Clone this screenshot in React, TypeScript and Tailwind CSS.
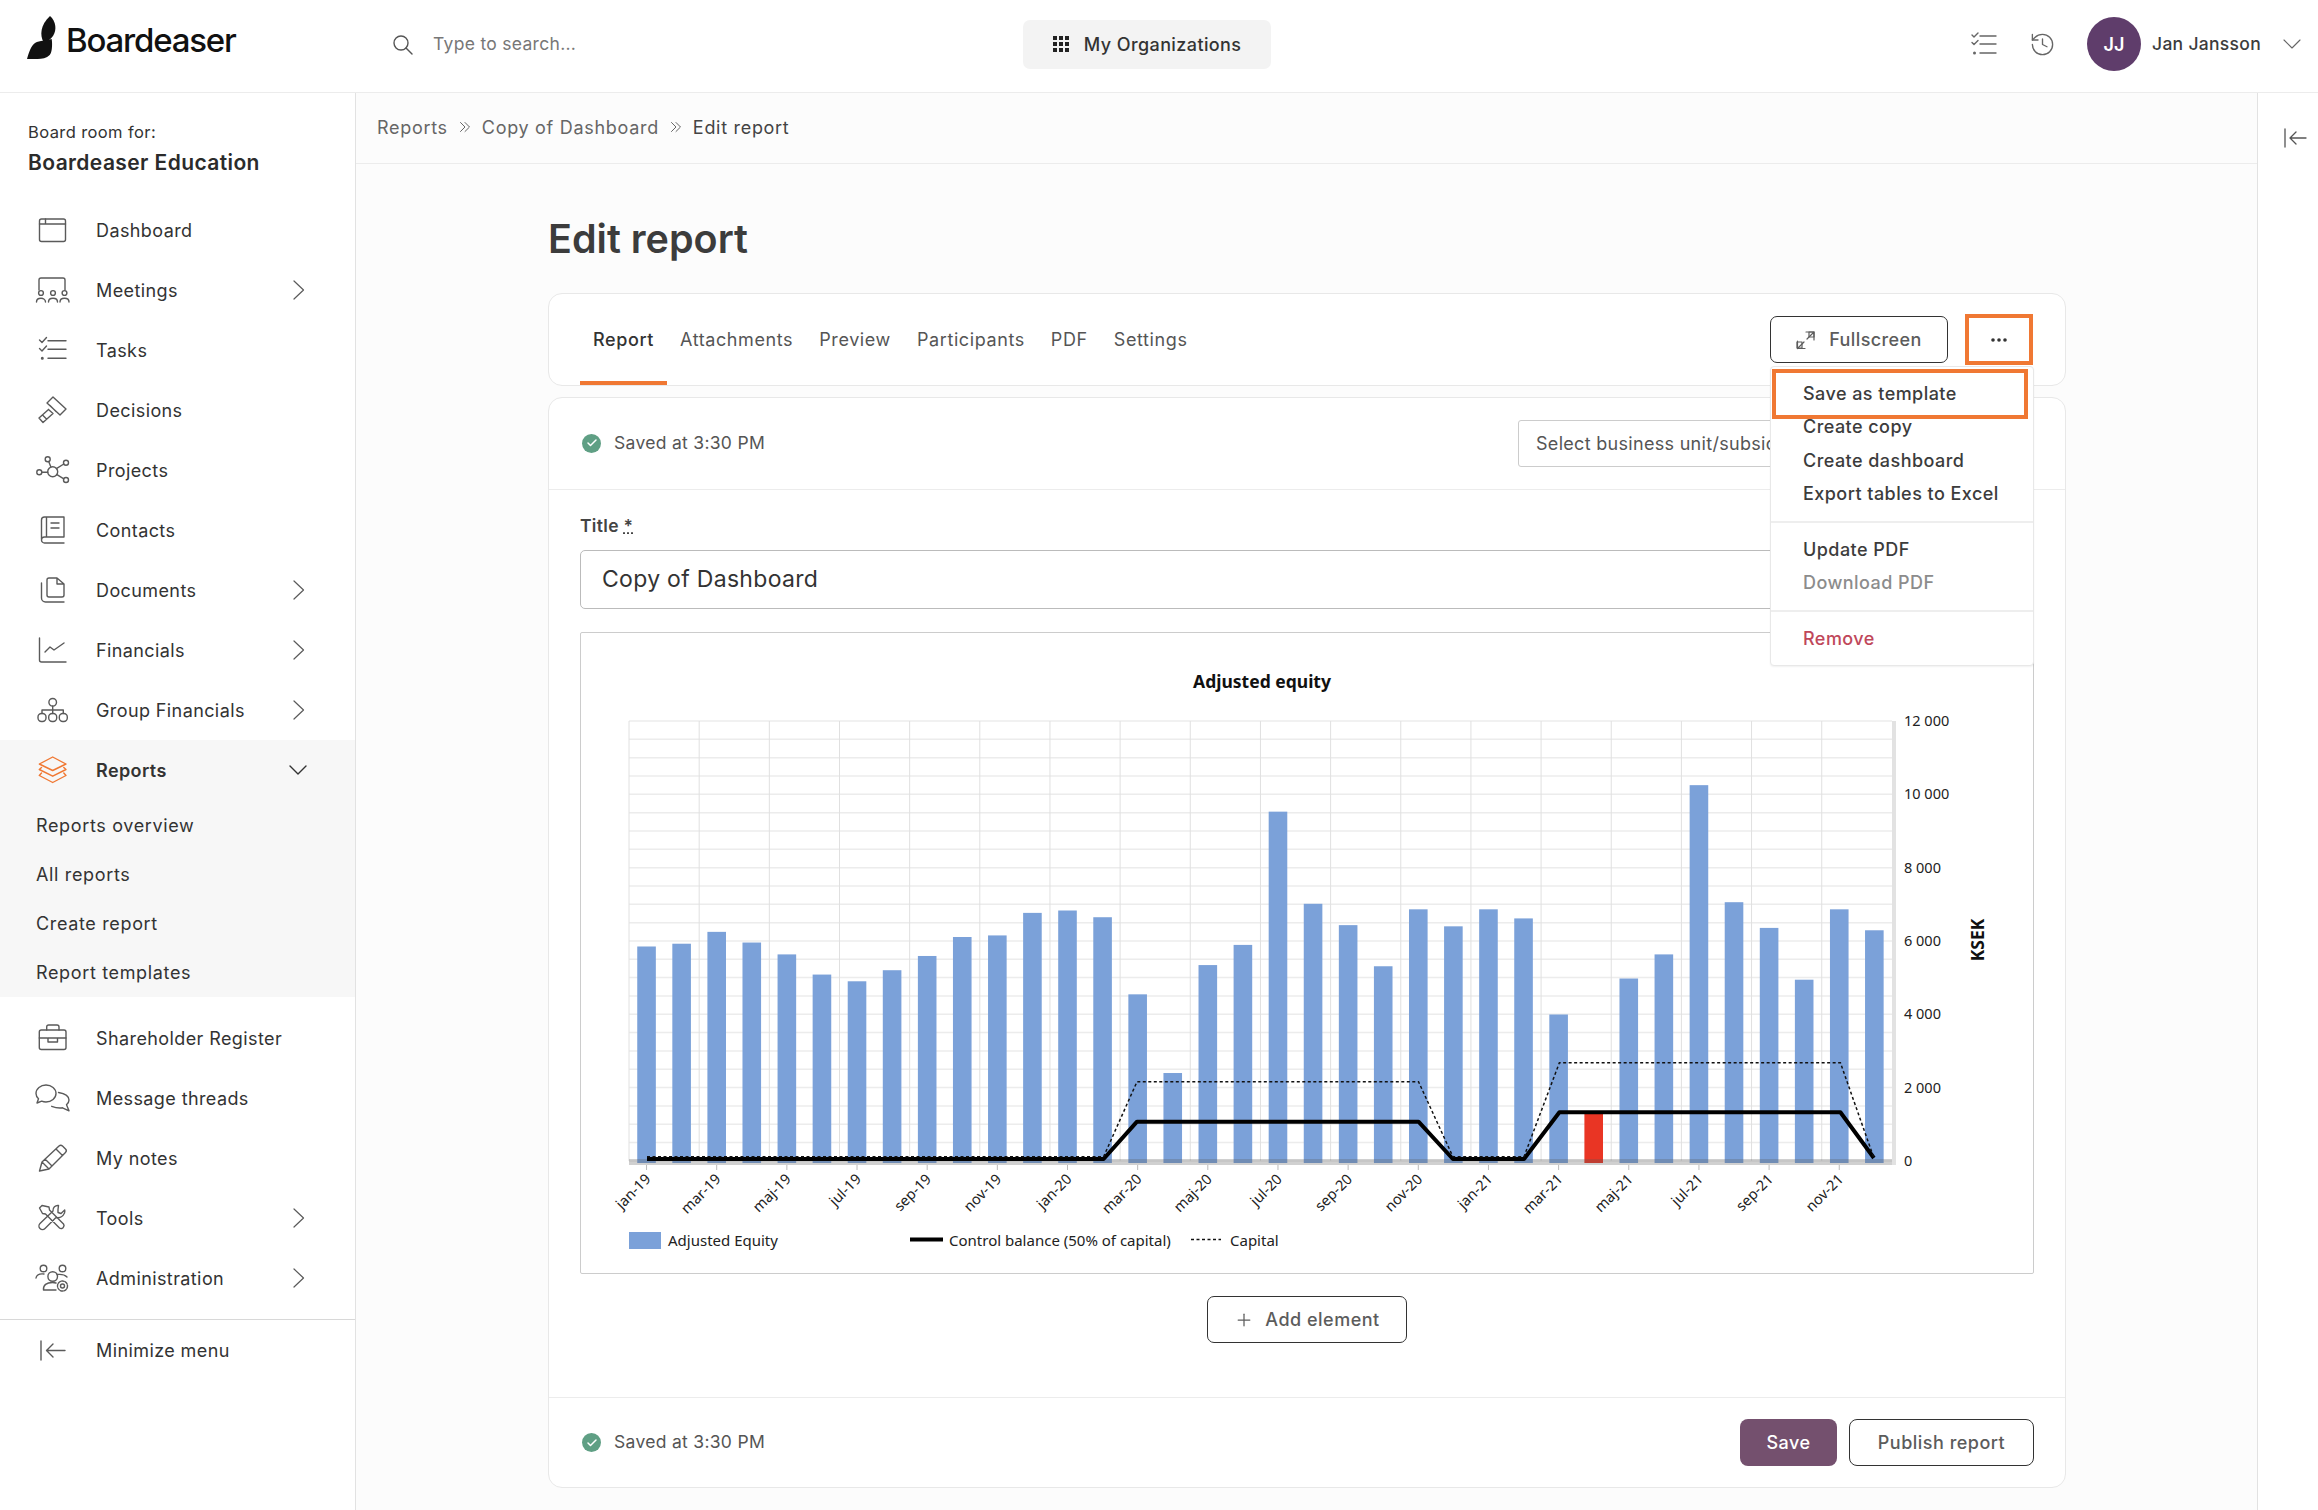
import { History, Plus, Check } from "lucide-react";
import type { ReactNode } from "react";

const s = { fill: "none", stroke: "currentColor", strokeWidth: 1.4, strokeLinecap: "round", strokeLinejoin: "round" } as const;

const icons: Record<string, ReactNode> = {
  dashboard: (
    <>
      <rect x="5.5" y="4" width="26" height="22.5" rx="2" />
      <path d="M5.5 9h26M11.5 4v5" />
    </>
  ),
  meetings: (
    <>
      <path d="M5 15V5a2 2 0 0 1 2-2h22a2 2 0 0 1 2 2v10" />
      <circle cx="7" cy="18" r="2.4" />
      <circle cx="19" cy="18" r="2.4" />
      <circle cx="30.5" cy="18" r="2.4" />
      <path d="M2.5 27c0-5 9-5 9 0M14.5 27c0-5 9-5 9 0M26 27c0-5 9-5 9 0" />
    </>
  ),
  tasks: (
    <>
      <path d="M14 5.7h18M14 14.3h18M14 23.3h18" />
      <path d="M5.5 5l2.5 2.5 4.5-5M5.5 13.5l2.5 2.5 4.5-5" />
      <circle cx="8.3" cy="23.3" r="0.8" />
    </>
  ),
  decisions: (
    <path d="M19 2l13 12-6 6-13-12zM16 10.500l6 6M14.500 14.500L19 18.500M14.500 14.500L5 23l4 4.500 10-9M9 20.500l3.500 3.500" />
  ),
  projects: (
    <>
      <circle cx="18.7" cy="16.7" r="5" />
      <circle cx="13.7" cy="4.3" r="2.5" />
      <circle cx="32" cy="7.7" r="2.5" />
      <circle cx="5.3" cy="17.3" r="2.5" />
      <circle cx="32" cy="25" r="2.5" />
      <path d="M14.7 6.6l2.2 5.4M29.8 9l-7.4 4.6M7.8 17.2h6M29.8 23.8l-7.2-4.4" />
    </>
  ),
  contacts: (
    <path d="M7.5 24V5a3 3 0 0 1 3-3H30v20H10.5a3 3 0 0 0 0 6H30M12.5 2.500V22M17 8h8M17 13h8" />
  ),
  documents: (
    <path d="M13 5a2 2 0 0 1 2-2h8l7 6v11a2 2 0 0 1-2 2H15a2 2 0 0 1-2-2zM23 3v6h7M7.5 8v15a4 4 0 0 0 4 4H30" />
  ),
  financials: <path d="M5.5 3v22a2 2 0 0 0 2 2h24.5M11 17l5-5 4 3 10-7" />,
  group: (
    <>
      <circle cx="18.7" cy="7.3" r="3.8" />
      <rect x="4" y="18.5" width="8" height="8" rx="3.5" />
      <rect x="14.7" y="18.5" width="8" height="8" rx="3.5" />
      <rect x="25.3" y="18.5" width="8" height="8" rx="3.5" />
      <path d="M18.7 11v7.5M8 18.5V15h21.3v3.5" />
    </>
  ),
  reports: (
    <path d="M18.7 2L32 9l-13.3 6.5L5.3 9zM7.5 12.5L5.3 14.5l13.4 6.7L32 14.5l-2.200-2M7.5 18L5.3 20.5l13.4 7L32 20.5 29.8 18" />
  ),
  shareholder: (
    <>
      <rect x="5.3" y="7" width="26.7" height="19.5" rx="2" />
      <path d="M12.7 7V4a2 2 0 0 1 2-2h8.300a2 2 0 0 1 2 2v3M5.300 15h8M24 15h8M14 15h9.500v4H14z" />
    </>
  ),
  message: (
    <path d="M12 2c5.500 0 10 3.800 10 8.500S17.500 19 12 19c-1.500 0-3-.3-4.300-.8L3 20l1.500-4.300C3 14.300 2 12.500 2 10.500 2 5.800 6.500 2 12 2zM24.500 9.500C30 10.500 35 13 35 17c0 2-1 3.500-2.500 4.800L35 27.800l-6.500-3c-3.500.5-7.500-.2-10.800-1.500" />
  ),
  notes: (
    <path d="M5.500 28L8 19 25 3a2.500 2.500 0 0 1 3.500 0l3 3a2.500 2.500 0 0 1 0 3.500L15 26zM8 19l7 7M11 16l7 7M22 6l6.500 6.500" />
  ),
  tools: (
    <path d="M8 2.500L5.500 5l3 5.500 3 .5 14 14a2.500 2.500 0 0 0 4-1 2.500 2.500 0 0 0 0-3l-14-14-.5-3zM24.500 2.500c-3-.5-6 2-5.500 5.500L6 20.500a3.500 3.500 0 0 0 5 5L22 14.500c3.500.8 7-1 8.500-4.500.3-1 .5-2 .2-3L27 10.500l-3-1V6.500z" />
  ),
  admin: (
    <>
      <circle cx="9.5" cy="5.5" r="3.3" />
      <circle cx="28.5" cy="5.5" r="3.3" />
      <circle cx="18.7" cy="13.5" r="4.8" />
      <path d="M2 15c.5-3 3.500-4.500 8-4M23 11.500c4-.5 8 .5 10 2.500M9.500 27c-.5-5 3-7.500 9-7.500 1.500 0 2.500 .2 3.500.5M9.500 27H22" />
      <circle cx="28.5" cy="23" r="2" />
      <circle cx="28.5" cy="23" r="5" strokeDasharray="2.5 1.2" />
    </>
  ),
  minimize: <path d="M7 6v19M31 15.500H13M19 9l-6.500 6.500L19 22" />,
};

function Icon({ name }: { name: string }) {
  return (
    <svg width="36" height="30" viewBox="0 0 36 30" {...s} className="shrink-0">
      {icons[name]}
    </svg>
  );
}

const mainNav = [
  { label: "Dashboard", icon: "dashboard" },
  { label: "Meetings", icon: "meetings", more: true },
  { label: "Tasks", icon: "tasks" },
  { label: "Decisions", icon: "decisions" },
  { label: "Projects", icon: "projects" },
  { label: "Contacts", icon: "contacts" },
  { label: "Documents", icon: "documents", more: true },
  { label: "Financials", icon: "financials", more: true },
  { label: "Group Financials", icon: "group", more: true },
];

const lowerNav = [
  { label: "Shareholder Register", icon: "shareholder" },
  { label: "Message threads", icon: "message" },
  { label: "My notes", icon: "notes" },
  { label: "Tools", icon: "tools", more: true },
  { label: "Administration", icon: "admin", more: true },
];

function NavRow({ label, icon, more }: { label: string; icon: string; more?: boolean }) {
  return (
    <div className="flex h-[60px] items-center pl-[34px] pr-[50px] text-[#5a5a5a]">
      <Icon name={icon} />
      <span className="ml-[26px] flex-1 text-[#333]">{label}</span>
      {more && (
        <svg width="12" height="20" viewBox="0 0 12 20" {...s} strokeWidth={1.2}>
          <path d="M1 1l9.500 9L1 19" />
        </svg>
      )}
    </div>
  );
}

function Sidebar() {
  return (
    <aside className="flex w-[356px] shrink-0 flex-col border-r border-[#e2e2e2] bg-white text-[18px] tracking-[0.4px]">
      <div className="px-[28px] pb-[25px] pt-[28px]">
        <div className="text-[16.5px] leading-[22px] text-[#333]">Board room for:</div>
        <div className="mt-[8px] text-[21px] font-semibold leading-[24px] text-[#2b2b2b]">Boardeaser Education</div>
      </div>
      <nav>
        {mainNav.map((n) => (
          <NavRow key={n.label} {...n} />
        ))}
      </nav>
      <div className="bg-[#f7f7f7]">
        <div className="flex h-[60px] items-center pl-[34px] pr-[48px] text-[#f07833]">
          <Icon name="reports" />
          <span className="ml-[26px] flex-1 font-semibold text-[#333]">Reports</span>
          <svg width="18" height="10" viewBox="0 0 18 10" {...s} className="text-[#333]">
            <path d="M1 1l8 8 8-8" />
          </svg>
        </div>
        <div className="pl-[36px] pt-[1px] tracking-[0.65px] text-[#333]">
          <div className="flex h-[49px] items-center">Reports overview</div>
          <div className="flex h-[49px] items-center">All reports</div>
          <div className="flex h-[49px] items-center">Create report</div>
          <div className="flex h-[49px] items-center">Report templates</div>
        </div>
      </div>
      <nav className="mt-[11px] border-b border-[#d8d8d8] pb-[11px]">
        {lowerNav.map((n) => (
          <NavRow key={n.label} {...n} />
        ))}
      </nav>
      <div className="flex h-[60px] items-center pl-[34px] text-[#5a5a5a]">
        <Icon name="minimize" />
        <span className="ml-[26px] text-[#333]">Minimize menu</span>
      </div>
    </aside>
  );
}

function Header() {
  return (
    <header className="flex h-[93px] shrink-0 items-center border-b border-[#ececec] bg-white pb-[4px]">
      <div className="ml-[27px] flex w-[345px] items-center pb-[6px]">
        <svg width="30" height="44" viewBox="0 0 30 44" className="mb-[6px]">
          <path d="M23 0c6 5 7 14 3 20-3 4-6 6-9.700 5.700C13 20 13 9 23 0z" fill="#111" />
          <path d="M0 43c2-7 4-13 8-16 5-3 11-2 16.700-4 1 7 0 14-2 16-3 3-8 4-12 4z" fill="#111" />
        </svg>
        <span className="ml-[9px] text-[33px] font-medium tracking-[-1.2px] text-[#111]">Boardeaser</span>
      </div>
      <svg width="21" height="21" viewBox="0 0 21 21" {...s} className="ml-[20px] text-[#555]">
        <circle cx="9" cy="9" r="7" />
        <path d="M14 14l6 6" />
      </svg>
      <span className="ml-[20px] text-[17.5px] tracking-[0.3px] text-[#777]">Type to search...</span>
      <div className="ml-[447px] flex h-[49px] w-[248px] items-center justify-center gap-[15px] rounded-[7px] bg-[#f3f3f3] text-[18px] font-medium tracking-[0.4px] text-[#333]">
        <svg width="16" height="16" viewBox="0 0 16 16" fill="#222">
          <rect x="0" y="0" width="4" height="4" />
          <rect x="6" y="0" width="4" height="4" />
          <rect x="12" y="0" width="4" height="4" />
          <rect x="0" y="6" width="4" height="4" />
          <rect x="6" y="6" width="4" height="4" />
          <rect x="12" y="6" width="4" height="4" />
          <rect x="0" y="12" width="4" height="4" />
          <rect x="6" y="12" width="4" height="4" />
          <rect x="12" y="12" width="4" height="4" />
        </svg>
        My Organizations
      </div>
      <div className="ml-auto flex items-center text-[#666]">
        <svg width="26" height="24" viewBox="0 0 26 24" {...s}>
          <path d="M9 4h16M9 12h16M9 21h16" />
          <path d="M1 3l2 2 4-4M1 10.500l2 2 4-4" />
          <circle cx="3.5" cy="21" r="0.8" />
        </svg>
        <History size={27} strokeWidth={1.2} className="ml-[32px]" />
        <div className="ml-[31px] flex h-[54px] w-[54px] items-center justify-center rounded-full bg-[#5f3d6b] text-[18px] font-semibold text-white">
          JJ
        </div>
        <span className="ml-[11px] text-[17.5px] font-medium tracking-[0.3px] text-[#3c3c3c]">Jan Jansson</span>
        <svg width="18" height="10" viewBox="0 0 18 10" {...s} strokeWidth={1.1} className="ml-[22px] mr-[17px]">
          <path d="M1 1l8 8 8-8" />
        </svg>
      </div>
    </header>
  );
}

function Crumb() {
  return (
    <svg width="12" height="12" viewBox="0 0 12 12" {...s} strokeWidth={1} className="mx-[11px] text-[#666]">
      <path d="M1.500 1.500L6 6l-4.500 4.500M6 1.500L10.500 6 6 10.500" />
    </svg>
  );
}

const tops = [
  722, 715, 685, 712, 742, 793, 810, 782, 746, 698, 694, 637, 631, 648, 843, 1042, 769, 718, 381, 614, 668, 772, 628,
  671, 628, 651, 894, 1145, 803, 742, 314, 610, 675, 806, 628, 681,
];
const months = ["jan", "mar", "maj", "jul", "sep", "nov"];
const labels = ["19", "20", "21"].flatMap((y) => months.map((m) => `${m}-${y}`));
const left = 629;
const step = 35.08;
const bottom = 1160;
const thick = "647,1158 1103.6,1158 1137,1120.7 1418.5,1120.7 1452.9,1158 1524,1158 1559.4,1111.2 1840.4,1111.2 1873.9,1157";
const dotted = "647,1155.7 1103.6,1155.7 1137,1080.7 1418.5,1080.7 1452.9,1155.7 1524,1155.7 1559.4,1061.7 1840.4,1061.7 1873.9,1157";

function Chart() {
  return (
    <svg width="1452" height="640" viewBox="581 632 1452 640" className="block font-['Noto_Sans',sans-serif]">
      <text x="1262" y="687" textAnchor="middle" fontSize="17.5" fontWeight="700" fill="#111">
        Adjusted equity
      </text>
      {Array.from({ length: 25 }, (_, k) => (
        <line key={k} x1={left} x2="1892" y1={720 + k * 18.33} y2={720 + k * 18.33} stroke="#ececec" strokeWidth="1.5" />
      ))}
      {Array.from({ length: 18 }, (_, k) => (
        <line key={k} x1={left + k * 70.16} x2={left + k * 70.16} y1="720" y2={bottom} stroke="#e0e0e0" />
      ))}
      {tops.map((t, i) => (
        <rect
          key={i}
          x={left + step * (i + 0.5) - 9.3}
          y={660 + t / 2.529}
          width="18.6"
          height={1162 - (660 + t / 2.529)}
          fill={i === 27 ? "#e93524" : "#7ba1d9"}
        />
      ))}
      <rect x={left} y="1158" width="1266" height="6" fill="#555" opacity="0.28" />
      <rect x="1892" y="720" width="4" height="444" fill="#e2e2e2" />
      {labels.map((l, i) => {
        const x = left + step * (i * 2 + 0.5);
        return (
          <g key={l}>
            <line x1={x} x2={x} y1="1164" y2="1169" stroke="#bbb" />
            <text x={x + 5} y="1179" textAnchor="end" fontSize="14.5" fill="#222" transform={`rotate(-45 ${x + 5} 1179)`}>
              {l}
            </text>
          </g>
        );
      })}
      <polyline points={thick} fill="none" stroke="#000" strokeWidth="4" strokeLinejoin="round" />
      <polyline points={dotted} fill="none" stroke="#111" strokeWidth="1.5" strokeDasharray="3 2.5" />
      {["0", "2 000", "4 000", "6 000", "8 000", "10 000", "12 000"].map((v, i) => (
        <text key={v} x="1904" y={1165 - i * 73.33} fontSize="14.5" fill="#222">
          {v}
        </text>
      ))}
      <text x="1984" y="939" textAnchor="middle" fontSize="17.5" fontWeight="700" fill="#111" transform="rotate(-90 1984 939)">
        KSEK
      </text>
      <rect x="629" y="1231" width="32" height="17" fill="#7ba1d9" />
      <text x="668" y="1245" fontSize="15" fill="#222">
        Adjusted Equity
      </text>
      <line x1="910" x2="943" y1="1238.5" y2="1238.5" stroke="#000" strokeWidth="4" />
      <text x="949" y="1245" fontSize="15" fill="#222">
        Control balance (50% of capital)
      </text>
      <line x1="1191" x2="1221" y1="1238.5" y2="1238.5" stroke="#111" strokeWidth="1.5" strokeDasharray="3 2.5" />
      <text x="1230" y="1245" fontSize="15" fill="#222">
        Capital
      </text>
    </svg>
  );
}

function Saved() {
  return (
    <div className="flex items-center gap-[13px] text-[17.5px] tracking-[0.3px] text-[#555]">
      <span className="flex h-[19px] w-[19px] items-center justify-center rounded-full bg-[#5f9f84] text-white">
        <Check size={12} strokeWidth={3} />
      </span>
      Saved at 3:30 PM
    </div>
  );
}

function ActionsMenu() {
  return (
    <div className="absolute left-[1221px] top-[72px] z-10 w-[264px] rounded-[4px] border border-[#e8e8e8] bg-white text-[18px] tracking-[0.45px] text-[#3c3c3c] shadow-[0_1px_2px_rgba(0,0,0,0.06)]">
      <div className="absolute left-[1px] top-[2px] h-[50px] w-[256px] border-4 border-[#f07833]" />
      <div className="px-[32px] pb-[11px] pt-[10px] font-medium">
        <div className="flex h-[33px] items-center">Save as template</div>
        <div className="flex h-[33.5px] items-center">Create copy</div>
        <div className="flex h-[33.5px] items-center">Create dashboard</div>
        <div className="flex h-[33px] items-center">Export tables to Excel</div>
      </div>
      <div className="border-t-2 border-[#eeeeee] px-[32px] pb-[11px] pt-[10px] font-medium">
        <div className="flex h-[33px] items-center">Update PDF</div>
        <div className="flex h-[33px] items-center text-[#8c8c8c]">Download PDF</div>
      </div>
      <div className="border-t-2 border-[#eeeeee] px-[32px] pb-[10px] pt-[10px] font-medium text-[#c0475a]">
        <div className="flex h-[33px] items-center">Remove</div>
      </div>
    </div>
  );
}

const tabs = ["Report", "Attachments", "Preview", "Participants", "PDF", "Settings"];

function TabBar() {
  return (
    <div className="relative flex h-[93px] items-stretch rounded-[14px] border border-[#e8e8e8] bg-white pl-[31px] pr-[32px] text-[18px] tracking-[0.6px]">
      {tabs.map((t, i) => (
        <div
          key={t}
          className={
            i === 0
              ? "flex items-center border-b-4 border-[#f07833] px-[13px] pt-[4px] font-medium text-[#333]"
              : "flex items-center px-[13px] text-[#555]"
          }
        >
          {t}
        </div>
      ))}
      <div className="ml-auto flex items-center gap-[17px] tracking-[0.4px]">
        <div className="flex h-[47px] w-[178px] items-center justify-center gap-[13px] rounded-[7px] border border-[#333] font-medium text-[#5c5c5c]">
          <svg width="20" height="20" viewBox="0 0 20 20" {...s} strokeWidth={1.2}>
            <path d="M10 2h8v8M18 2l-7 7M1.500 11v7.500H9M1.500 18.500L8 12" />
            <rect x="1" y="12" width="5" height="6" />
            <rect x="13" y="2" width="5" height="5" />
          </svg>
          Fullscreen
        </div>
        <div className="flex h-[51px] w-[68px] items-center justify-center border-4 border-[#f07833]">
          <svg width="16" height="4" viewBox="0 0 16 4" fill="#333">
            <circle cx="2" cy="2" r="1.8" />
            <circle cx="8" cy="2" r="1.8" />
            <circle cx="14" cy="2" r="1.8" />
          </svg>
        </div>
      </div>
      <ActionsMenu />
    </div>
  );
}

export default function App() {
  return (
    <div className="flex h-screen w-screen flex-col overflow-hidden bg-white font-['Inter',sans-serif]">
      <Header />
      <div className="flex min-h-0 flex-1">
        <Sidebar />
        <main className="min-w-0 flex-1 bg-[#fcfcfc]">
          <div className="flex h-[71px] items-center border-b border-[#ececec] pb-[2px] pl-[21px] text-[18px] tracking-[0.7px] text-[#666]">
            Reports
            <Crumb />
            Copy of Dashboard
            <Crumb />
            <span className="text-[#444]">Edit report</span>
          </div>
          <div className="ml-[192px] w-[1518px]">
            <h1 className="pb-[31px] pt-[52px] text-[39.5px] font-semibold leading-[46px] text-[#3c3c3c]">Edit report</h1>
            <TabBar />
            <section className="mt-[11px] h-[1091px] rounded-[14px] border border-[#e8e8e8] bg-white">
              <div className="flex h-[92px] items-center justify-between border-b border-[#ececec] pb-[1px] pl-[33px] pr-[34px]">
                <Saved />
                <div className="flex h-[47px] w-[513px] items-center overflow-hidden whitespace-nowrap rounded-[3px] border border-[#ccc] pl-[17px] text-[18px] tracking-[0.3px] text-[#555]">
                  Select business unit/subsidiary
                </div>
              </div>
              <div className="px-[31px] pt-[26px]">
                <div className="text-[17.5px] font-semibold leading-[20px] tracking-[0.3px] text-[#444]">
                  Title <span className="underline decoration-dotted">*</span>
                </div>
                <div className="mt-[14px] flex h-[59px] items-center rounded-[5px] border border-[#bbb] pl-[21px] text-[23px] tracking-[0.3px] text-[#333]">
                  Copy of Dashboard
                </div>
                <div className="mt-[23px] rounded-[2px] border border-[#ccc]">
                  <Chart />
                </div>
                <div className="mt-[22px] flex justify-center">
                  <div className="flex h-[47px] w-[200px] items-center justify-center gap-[11px] rounded-[7px] border border-[#333] text-[18px] font-medium tracking-[0.5px] text-[#5c5c5c]">
                    <Plus size={20} strokeWidth={1.5} />
                    Add element
                  </div>
                </div>
              </div>
              <div className="mt-[54px] flex h-[91px] items-center justify-between border-t border-[#ececec] pb-[1px] pl-[33px] pr-[31px]">
                <Saved />
                <div className="flex gap-[12px] text-[18px] font-medium tracking-[0.5px]">
                  <div className="flex h-[47px] w-[97px] items-center justify-center rounded-[8px] bg-[#74506e] text-white">Save</div>
                  <div className="flex h-[47px] w-[185px] items-center justify-center rounded-[8px] border border-[#333] text-[#5c5c5c]">
                    Publish report
                  </div>
                </div>
              </div>
            </section>
          </div>
        </main>
        <div className="w-[61px] shrink-0 border-l border-[#e2e2e2] bg-white pl-[25px] pt-[34px] text-[#555]">
          <svg width="24" height="22" viewBox="0 0 24 22" {...s} strokeWidth={1.3}>
            <path d="M2 2v18M23 11H7M13 5l-6 6 6 6" />
          </svg>
        </div>
      </div>
    </div>
  );
}
